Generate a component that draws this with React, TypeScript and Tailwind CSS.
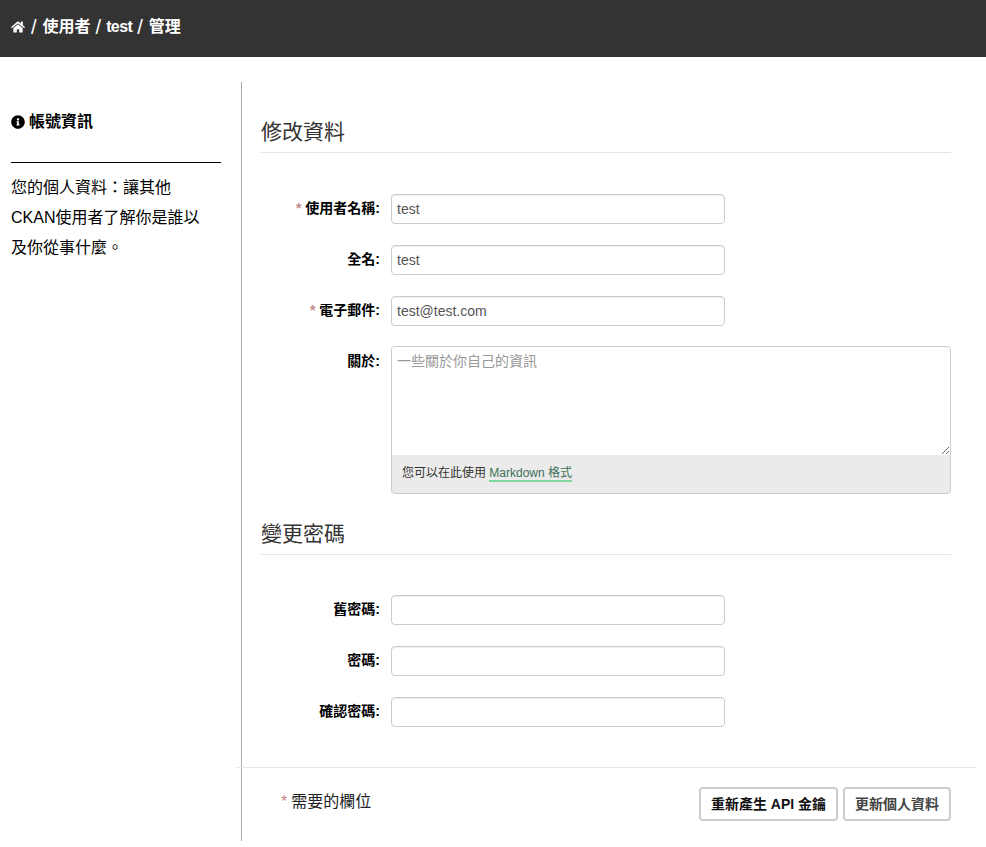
import React from 'react';
import { FaHome, FaInfoCircle } from 'react-icons/fa';

const fontStack = "font-['Liberation_Sans','Noto_Sans_CJK_TC',sans-serif]";

interface FieldProps {
  label: string;
  value?: string;
  type?: string;
  required?: boolean;
}

const Field: React.FC<FieldProps> = ({ label, value, type = 'text', required }) => (
  <div className="flex items-center">
    <label className="w-[130px] text-right text-[14px] font-bold text-black pr-[11px] leading-[20px] -translate-y-px">
      {required && <span className="text-[#c6898b] font-bold mr-1">*</span>}
      {label}:
    </label>
    <input
      type={type}
      defaultValue={value}
      className="w-[334px] h-[30px] border border-[#ccc] rounded-[4px] px-[5px] text-[14px] text-[#555] shadow-[inset_0_1px_1px_rgba(0,0,0,0.075)] outline-none"
    />
  </div>
);

const SectionTitle: React.FC<{ title: string }> = ({ title }) => (
  <h2 className="text-[21px] leading-[30px] text-[#333] border-b border-[#e5e5e5] pt-px pb-[5px]">{title}</h2>
);

export default function App() {
  return (
    <div className={`${fontStack} min-h-[847px] bg-white`}>
      {/* breadcrumb bar */}
      <div className="h-[57px] bg-[#333] flex items-center pl-[11px] pb-[3px] text-white font-bold text-[16px]">
        <FaHome className="w-[14px] h-[14px] mr-[6px]" />
        <span className="text-[20px] font-normal mr-[6px]">/</span>
        <span>使用者</span>
        <span className="text-[20px] font-normal mx-[5px]">/</span>
        <span className="tracking-[-0.6px]">test</span>
        <span className="text-[20px] font-normal ml-[5px] mr-[6px]">/</span>
        <span>管理</span>
      </div>

      <div className="flex pt-[25px]">
        {/* sidebar */}
        <aside className="w-[241px] shrink-0 pl-[11px] pr-[20px] pt-[30px] text-black">
          <h3 className="flex items-center gap-[4px] text-[16px] font-bold leading-[20px]">
            <FaInfoCircle className="w-[14px] h-[14px]" />
            帳號資訊
          </h3>
          <div className="border-t border-black mt-[30px] mb-[10px]" />
          <p className="w-[200px] text-[16px] leading-[30px]">您的個人資料：讓其他CKAN使用者了解你是誰以及你從事什麼。</p>
        </aside>

        {/* form */}
        <main className="w-[735px] border-l border-[#aaa] h-[759px] flex flex-col">
          <div className="pl-[19px] pr-[25px] pt-[34px]">
            <SectionTitle title="修改資料" />
            <div className="flex flex-col gap-[21px] mt-[41px]">
              <Field label="使用者名稱" value="test" required />
              <Field label="全名" value="test" />
              <Field label="電子郵件" value="test@test.com" type="email" required />
            </div>
            <div className="flex mt-[20px]">
              <label className="w-[130px] text-right text-[14px] font-bold text-black pr-[11px] leading-[20px] pt-[5px]">
                關於:
              </label>
              <div className="w-[560px] h-[148px] border border-[#ccc] rounded-[4px] bg-[#ebebeb] flex flex-col overflow-hidden shadow-[inset_0_1px_1px_rgba(0,0,0,0.075)]">
                <textarea
                  placeholder="一些關於你自己的資訊"
                  className="w-full h-[108px] shrink-0 bg-white px-[5px] py-[4px] text-[14px] leading-[20px] text-[#555] placeholder:text-[#999] outline-none block"
                />
                <div className="pl-[10px] pt-[12px] text-[12px] leading-[13px] text-[#333]">
                  您可以在此使用{' '}
                  <a className="inline-block leading-[13px] text-[#3d7057] border-b-2 border-[#80d8a0]">Markdown 格式</a>
                </div>
              </div>
            </div>

            <div className="mt-[24px]">
              <SectionTitle title="變更密碼" />
            </div>
            <div className="flex flex-col gap-[21px] mt-[40px]">
              <Field label="舊密碼" type="password" />
              <Field label="密碼" type="password" />
              <Field label="確認密碼" type="password" />
            </div>
          </div>

          <div className="-ml-[5px] mt-[40px] border-t border-[#e5e5e5] flex items-start justify-between pl-[44px] pr-[25px] pt-[19px]">
            <span className="text-[16px] text-[#222] leading-[30px]">
              <span className="text-[#c6898b] mr-1">*</span>需要的欄位
            </span>
            <div className="flex gap-[5px]">
              <button className="h-[34px] w-[139px] border-2 border-[#ccc] rounded-[4px] bg-white text-[14px] font-bold text-[#111] whitespace-nowrap">
                重新產生 API 金鑰
              </button>
              <button className="h-[34px] w-[108px] border-2 border-[#ccc] rounded-[4px] bg-white text-[14px] font-bold text-[#444] whitespace-nowrap">
                更新個人資料
              </button>
            </div>
          </div>
        </main>
      </div>
    </div>
  );
}
